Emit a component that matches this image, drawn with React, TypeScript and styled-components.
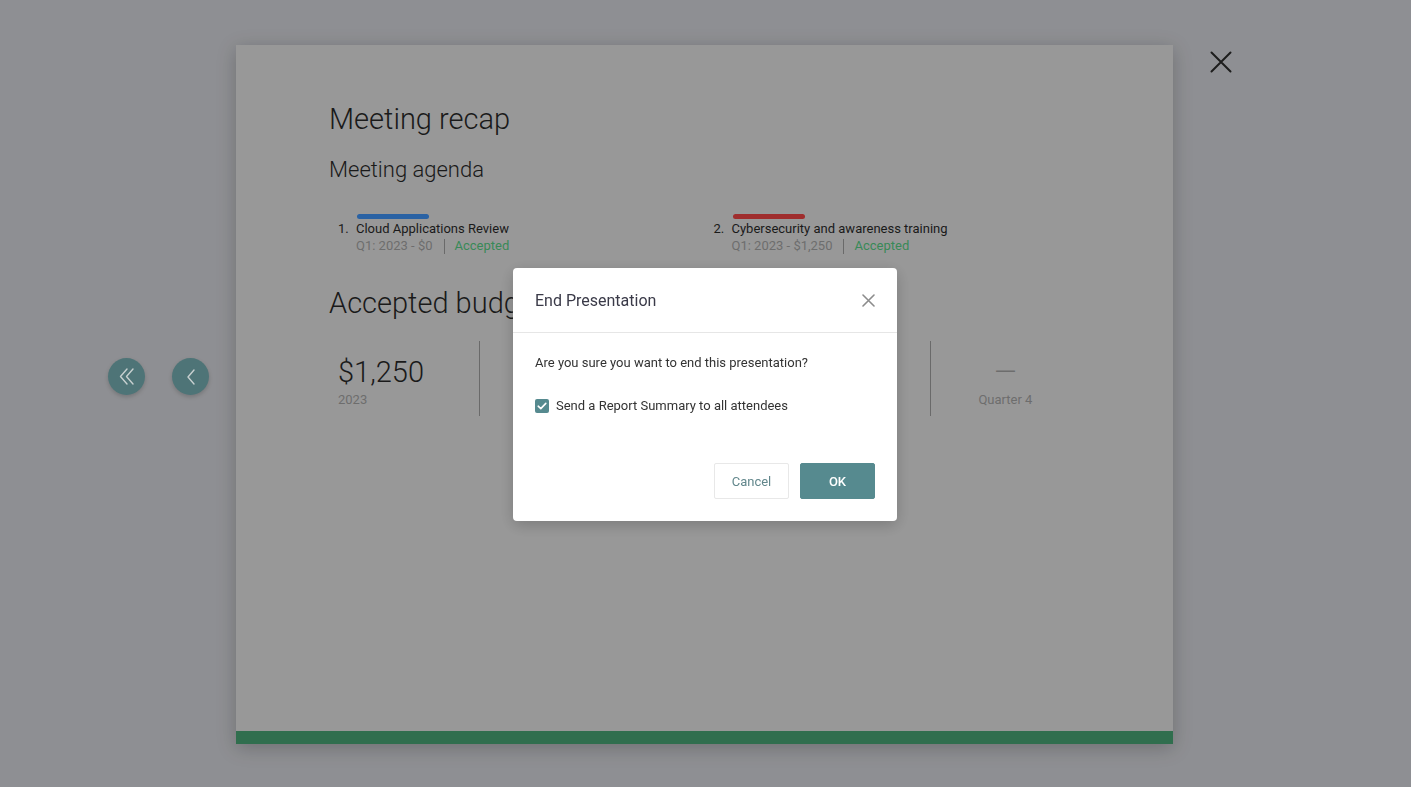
import React from "react"
import styled, { createGlobalStyle } from "styled-components"

const GlobalStyle = createGlobalStyle`
    * { box-sizing: border-box; }
    html, body { margin: 0; padding: 0; }
    body {
        font-family: Roboto, "Liberation Sans", Arial, sans-serif;
        background: #9fa0a4;
        overflow: hidden;
    }
`

const agenda = [
    { title: "Cloud Applications Review", amount: "Q1: 2023 - $0", status: "Accepted", color: "#2f6eb7" },
    { title: "Cybersecurity and awareness training", amount: "Q1: 2023 - $1,250", status: "Accepted", color: "#b23333" },
]

const stats = [
    { value: "$1,250", label: "2023", first: true },
    { value: "—", label: "Quarter 1" },
    { value: "—", label: "Quarter 2" },
    { value: "—", label: "Quarter 3" },
    { value: "—", label: "Quarter 4" },
]

export default function App() {
    return (
        <>
            <GlobalStyle />
            <Page>
                <NavColumn>
                    <NavButton aria-label="First slide">
                        <svg width="16" height="17" viewBox="0 0 16 17" fill="none" stroke="currentColor" strokeWidth="1.4" strokeLinecap="round" strokeLinejoin="round">
                            <path d="M8 1 L1.5 8.5 L8 16" />
                            <path d="M14 1 L7.5 8.5 L14 16" />
                        </svg>
                    </NavButton>
                    <NavButton aria-label="Previous slide">
                        <svg width="10" height="16" viewBox="0 0 10 16" fill="none" stroke="currentColor" strokeWidth="1.4" strokeLinecap="round" strokeLinejoin="round">
                            <path d="M8 1 L2 8 L8 15" />
                        </svg>
                    </NavButton>
                </NavColumn>

                <Slide>
                    <SlideBody>
                        <Heading>Meeting recap</Heading>
                        <SubHeading>Meeting agenda</SubHeading>
                        <AgendaList>
                            {agenda.map((item, i) => (
                                <AgendaItem key={item.title}>
                                    <AgendaNumber>{i + 1}.</AgendaNumber>
                                    <AgendaInfo>
                                        <ColorBar $color={item.color} />
                                        <AgendaTitle>{item.title}</AgendaTitle>
                                        <AgendaMeta>
                                            <span>{item.amount}</span>
                                            <MetaDivider />
                                            <Status>{item.status}</Status>
                                        </AgendaMeta>
                                    </AgendaInfo>
                                </AgendaItem>
                            ))}
                        </AgendaList>
                        <SectionHeading>Accepted budget</SectionHeading>
                        <StatsRow>
                            {stats.map((s) => (
                                <StatCell key={s.label} $first={!!s.first}>
                                    <StatValue $dash={!s.first}>{s.value}</StatValue>
                                    <StatLabel>{s.label}</StatLabel>
                                </StatCell>
                            ))}
                        </StatsRow>
                    </SlideBody>
                    <ProgressBar />
                </Slide>

                <CloseColumn>
                    <CloseButton aria-label="Close">
                        <svg width="22" height="22" viewBox="0 0 22 22" fill="none" stroke="currentColor" strokeWidth="2" strokeLinecap="round">
                            <path d="M1.5 1.5 L20.5 20.5 M20.5 1.5 L1.5 20.5" />
                        </svg>
                    </CloseButton>
                </CloseColumn>
            </Page>

            <Backdrop>
                <Dialog role="dialog">
                    <DialogHeader>
                        <DialogTitle>End Presentation</DialogTitle>
                        <DialogClose aria-label="Close dialog">
                            <svg width="13" height="13" viewBox="0 0 13 13" fill="none" stroke="currentColor" strokeWidth="1.6" strokeLinecap="round">
                                <path d="M1 1 L12 12 M12 1 L1 12" />
                            </svg>
                        </DialogClose>
                    </DialogHeader>
                    <DialogBody>
                        <Question>Are you sure you want to end this presentation?</Question>
                        <CheckRow>
                            <CheckBox>
                                <svg width="10" height="8" viewBox="0 0 10 8" fill="none" stroke="#fff" strokeWidth="1.6" strokeLinecap="round" strokeLinejoin="round">
                                    <path d="M1.2 4.2 L3.8 6.6 L8.8 1.4" />
                                </svg>
                            </CheckBox>
                            <CheckLabel>Send a Report Summary to all attendees</CheckLabel>
                        </CheckRow>
                    </DialogBody>
                    <DialogFooter>
                        <Button>Cancel</Button>
                        <Button $primary>OK</Button>
                    </DialogFooter>
                </Dialog>
            </Backdrop>
        </>
    )
}

const Page = styled.div`
    width: 100vw;
    height: 100vh;
    display: grid;
    grid-template-columns: 236px 937px 1fr;
    padding-top: 45px;
    align-items: start;
`

const NavColumn = styled.div`
    display: flex;
    justify-content: flex-end;
    gap: 27px;
    padding-right: 27px;
    margin-top: 313px;
`

const NavButton = styled.button`
    width: 37px;
    height: 37px;
    border-radius: 50%;
    border: none;
    padding: 0;
    display: flex;
    align-items: center;
    justify-content: center;
    background: #578285;
    color: #dee7e7;
    box-shadow: 0 2px 4px rgba(0, 0, 0, 0.18);
    cursor: pointer;
`

const Slide = styled.section`
    height: 699px;
    background: #aaaaaa;
    display: flex;
    flex-direction: column;
    box-shadow: 0 4px 18px rgba(0, 0, 0, 0.22);
`

const SlideBody = styled.div`
    flex: 1;
    padding: 56px 93px 0;
    display: flex;
    flex-direction: column;
`

const Heading = styled.h1`
    margin: 0;
    font-size: 29px;
    line-height: 36px;
    font-weight: 300;
    color: #1d1d1d;
`

const SubHeading = styled.h2`
    margin: 20px 0 0;
    font-size: 22px;
    line-height: 26px;
    font-weight: 300;
    color: #1d1d1d;
`

const AgendaList = styled.ol`
    margin: 31px 0 0;
    padding: 0;
    list-style: none;
    display: grid;
    grid-template-columns: 1fr 1fr;
`

const AgendaItem = styled.li`
    display: flex;
    align-items: flex-start;
    padding-left: 9px;
`

const AgendaNumber = styled.span`
    width: 18px;
    margin-top: 7px;
    font-size: 13px;
    line-height: 16px;
    color: #1d1d1d;
`

const AgendaInfo = styled.div`
    display: flex;
    flex-direction: column;
`

const ColorBar = styled.span<{ $color: string }>`
    width: 72px;
    height: 5px;
    border-radius: 3px;
    margin: 0 0 2px 1px;
    background: ${(p) => p.$color};
`

const AgendaTitle = styled.span`
    font-size: 13px;
    line-height: 16px;
    color: #1d1d1d;
`

const AgendaMeta = styled.div`
    display: flex;
    align-items: center;
    font-size: 13px;
    line-height: 18px;
    color: #7a7a7a;
`

const MetaDivider = styled.span`
    width: 1px;
    height: 15px;
    margin: 0 10px 0 11px;
    background: #767676;
`

const Status = styled.span`
    color: #409962;
`

const SectionHeading = styled.h2`
    margin: 30px 0 0;
    font-size: 29px;
    line-height: 36px;
    font-weight: 300;
    color: #1d1d1d;
`

const StatsRow = styled.div`
    margin-top: 20px;
    display: grid;
    grid-template-columns: repeat(5, 1fr);
`

const StatCell = styled.div<{ $first: boolean }>`
    height: 75px;
    padding: 13px 9px 0;
    display: flex;
    flex-direction: column;
    align-items: ${(p) => (p.$first ? "flex-start" : "center")};
    border-left: ${(p) => (p.$first ? "none" : "1px solid #767676")};
`

const StatValue = styled.span<{ $dash: boolean }>`
    font-size: 29px;
    line-height: 36px;
    font-weight: 300;
    color: ${(p) => (p.$dash ? "#7a7a7a" : "#1d1d1d")};
`

const StatLabel = styled.span`
    margin-top: 2px;
    font-size: 13px;
    line-height: 16px;
    color: #7a7a7a;
`

const ProgressBar = styled.div`
    height: 13px;
    background: #367b57;
`

const CloseColumn = styled.div`
    padding: 5px 0 0 36px;
`

const CloseButton = styled.button`
    width: 24px;
    height: 24px;
    padding: 0;
    border: none;
    background: transparent;
    color: #212121;
    display: flex;
    align-items: center;
    justify-content: center;
    cursor: pointer;
`

const Backdrop = styled.div`
    position: fixed;
    inset: 0;
    background: rgba(0, 0, 0, 0.1);
    display: flex;
    align-items: center;
    justify-content: center;
    padding: 2px 1px 0 0;
`

const Dialog = styled.div`
    width: 384px;
    background: #fff;
    border-radius: 4px;
    box-shadow: 0 4px 16px rgba(0, 0, 0, 0.2);
    display: flex;
    flex-direction: column;
`

const DialogHeader = styled.div`
    height: 65px;
    padding: 0 22px 0 22px;
    border-bottom: 1px solid #e6e6e6;
    display: flex;
    align-items: center;
    justify-content: space-between;
`

const DialogTitle = styled.h3`
    margin: 0;
    font-size: 16px;
    font-weight: 400;
    color: #3a3a48;
`

const DialogClose = styled.button`
    width: 14px;
    height: 14px;
    padding: 0;
    border: none;
    background: transparent;
    color: #8c8c8c;
    display: flex;
    align-items: center;
    justify-content: center;
    cursor: pointer;
`

const DialogBody = styled.div`
    padding: 20px 22px 0;
    display: flex;
    flex-direction: column;
    gap: 23px;
`

const Question = styled.p`
    margin: 0;
    font-size: 13px;
    line-height: 20px;
    color: #333;
`

const CheckRow = styled.label`
    display: flex;
    align-items: center;
    gap: 7px;
    cursor: pointer;
`

const CheckBox = styled.span`
    width: 14px;
    height: 14px;
    border-radius: 2px;
    background: #568a8f;
    display: flex;
    align-items: center;
    justify-content: center;
`

const CheckLabel = styled.span`
    font-size: 13px;
    line-height: 20px;
    color: #333;
`

const DialogFooter = styled.div`
    padding: 47px 22px 22px;
    display: flex;
    justify-content: flex-end;
    gap: 11px;
`

const Button = styled.button<{ $primary?: boolean }>`
    width: 75px;
    height: 36px;
    border-radius: 2px;
    font-family: inherit;
    font-size: 13px;
    font-weight: ${(p) => (p.$primary ? 500 : 400)};
    cursor: pointer;
    border: 1px solid ${(p) => (p.$primary ? "#568a8f" : "#e8e8e8")};
    background: ${(p) => (p.$primary ? "#568a8f" : "#fff")};
    color: ${(p) => (p.$primary ? "#fff" : "#62878c")};
`
